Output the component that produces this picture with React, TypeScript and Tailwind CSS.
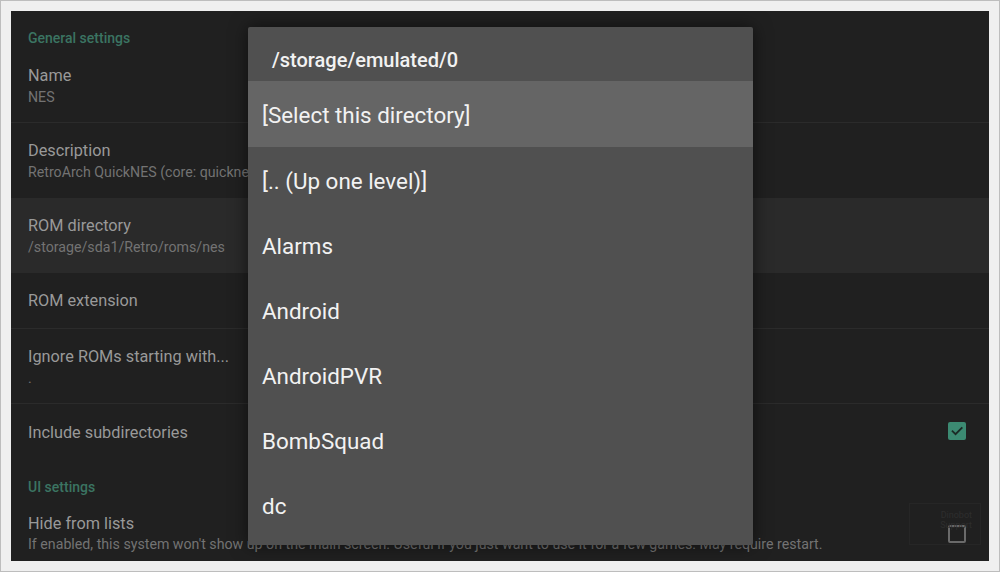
import React from 'react';

type Row = {
  title: string;
  sub?: string;
  h: number;
  highlight?: boolean;
  check?: 'on' | 'off';
  divider?: boolean;
};

const general: Row[] = [
  { title: 'Name', sub: 'NES', h: 75, divider: true },
  { title: 'Description', sub: 'RetroArch QuickNES (core: quicknes)', h: 75 },
  { title: 'ROM directory', sub: '/storage/sda1/Retro/roms/nes', h: 75, highlight: true },
  { title: 'ROM extension', h: 56, divider: true },
  { title: 'Ignore ROMs starting with...', sub: '.', h: 75, divider: true },
  { title: 'Include subdirectories', h: 56, check: 'on' },
];

const entries = ['[.. (Up one level)]', 'Alarms', 'Android', 'AndroidPVR', 'BombSquad', 'dc'];

const font = { fontFamily: 'Roboto, "Liberation Sans", sans-serif' };

const CategoryHeader: React.FC<{ label: string }> = ({ label }) => (
  <div className="h-[37px] pt-[19px] pl-[17px] text-[14px] leading-[16px] font-medium text-[#3b7462]">{label}</div>
);

const SettingRow: React.FC<{ row: Row }> = ({ row }) => (
  <div
    className={`flex items-center pl-[17px] pr-[23px] ${row.highlight ? 'bg-[#2a2a2a]' : ''} ${
      row.divider ? 'border-b border-[#2b2b2b]' : ''
    }`}
    style={{ height: row.h }}
  >
    <div className="flex-1 min-w-0">
      <div className="text-[16.3px] leading-[20px] text-[#999999] pt-[1px]">{row.title}</div>
      {row.sub && <div className="text-[14.2px] leading-[18px] mt-[2px] text-[#737373] whitespace-nowrap">{row.sub}</div>}
    </div>
    {row.check === 'on' && (
      <div className="relative -top-[1px] w-[18px] h-[18px] rounded-[2px] bg-[#3c8a72] flex items-center justify-center">
        <svg width="14" height="14" viewBox="0 0 24 24" fill="none" stroke="#1b2a25" strokeWidth="3.2" strokeLinecap="square">
          <path d="M4.5 12.5l5 5L20 7" />
        </svg>
      </div>
    )}
  </div>
);

export default function App() {
  return (
    <div className="w-[1000px] h-[572px] bg-[#efefef] border border-[#bdbdbd] p-[10px]" style={font}>
      <div className="relative w-[978px] h-[550px] bg-[#202020] overflow-hidden">
        <CategoryHeader label="General settings" />
        {general.map((r) => (
          <SettingRow key={r.title} row={r} />
        ))}
        <CategoryHeader label="UI settings" />
        <div className="flex items-start pl-[17px] pr-[23px] pt-[17px]">
          <div className="flex-1 min-w-0">
            <div className="text-[16.3px] leading-[20px] text-[#999999]">Hide from lists</div>
            <div className="text-[14.2px] leading-[18px] mt-[1px] text-[#737373] whitespace-nowrap">
              If enabled, this system won't show up on the main screen. Useful if you just want to use it for a few games. May require restart.
            </div>
          </div>
          <div className="mt-[11px] w-[18px] h-[18px] shrink-0 rounded-[2px] border-2 border-[#6a6a6a]" />
        </div>

        {/* faint watermark overlay */}
        <div className="absolute right-[8px] bottom-[16px] w-[72px] h-[42px] border border-[#262626] pt-[6px] pr-[8px] text-[9px] leading-[10px] text-[#2e2e2e] text-right">
          Dinobot
          <br />
          Support
        </div>

        {/* directory picker dialog */}
        <div className="absolute left-[237px] top-[16px] w-[505px] h-[518px] bg-[#505050] rounded-[2px] shadow-[0_0_18px_rgba(0,0,0,0.55)] overflow-hidden">
          <div className="h-[54px] flex items-end pb-[9px] pl-[24px] text-[20px] leading-[24px] font-medium text-[#f2f2f2]">
            /storage/emulated/0
          </div>
          <div className="h-[66px] flex items-center pt-[3px] pl-[14px] bg-[#656565] text-[22.4px] text-[#f2f2f2]">
            [Select this directory]
          </div>
          {entries.map((e) => (
            <div key={e} className="h-[65px] flex items-center pt-[4px] pl-[14px] text-[22.4px] text-[#f2f2f2]">
              {e}
            </div>
          ))}
        </div>
      </div>
    </div>
  );
}
